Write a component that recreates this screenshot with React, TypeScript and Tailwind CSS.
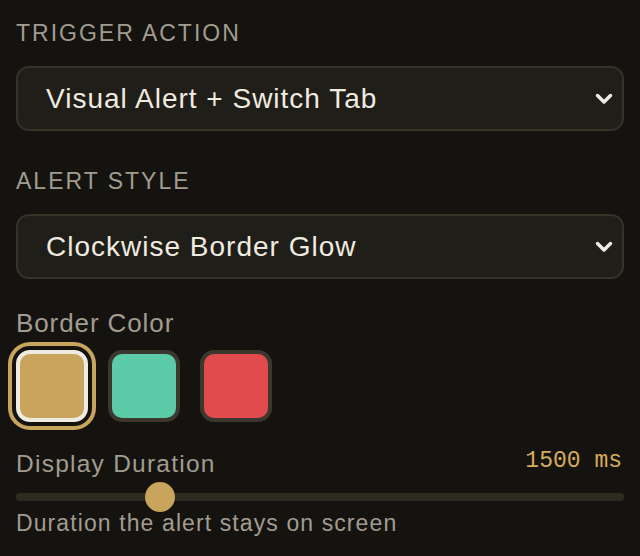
import { useState } from "react";

const colors = [
  { id: "gold", cls: "bg-[#c9a45c]" },
  { id: "teal", cls: "bg-[#5ccba8]" },
  { id: "red", cls: "bg-[#e24b4d]" },
];

function Chevron() {
  return (
    <svg width="20" height="14" viewBox="0 0 20 14" className="absolute right-[8px] top-1/2 -translate-y-1/2">
      <polyline points="3.5,3.5 10,10 16.5,3.5" fill="none" stroke="#f0ebe0" strokeWidth="3.5" strokeLinecap="round" strokeLinejoin="round" />
    </svg>
  );
}

function SelectBox({ label, value }: { label: string; value: string }) {
  return (
    <div className="flex flex-col">
      <div className="text-[23px] leading-none tracking-[2px] uppercase text-[#a29c90] pt-[22px] pb-[21px]">{label}</div>
      <div className="relative h-[65px] rounded-[13px] border-2 border-[#36322a] bg-[#201e18] flex items-center pl-[28px]">
        <span className="text-[28px] leading-none tracking-[1px] text-[#f0ebe0]">{value}</span>
        <Chevron />
      </div>
    </div>
  );
}

export default function App() {
  const [picked, setPicked] = useState("gold");
  const ms = 1500;

  return (
    <div className="w-[640px] h-[556px] bg-[#15130f] px-[16px] overflow-hidden" style={{ fontFamily: "'Liberation Sans', Arial, sans-serif" }}>
      <SelectBox label="Trigger Action" value="Visual Alert + Switch Tab" />
      <div className="h-[17px]" />
      <SelectBox label="Alert Style" value="Clockwise Border Glow" />

      <div className="text-[26px] leading-none tracking-[0.9px] text-[#a29c90] mt-[31px]">Border Color</div>
      <div className="flex gap-[20px] mt-[14px]">
        {colors.map((c) => (
          <button
            key={c.id}
            onClick={() => setPicked(c.id)}
            className={`w-[72px] h-[72px] rounded-[14px] border-[4px] ${c.cls} ${
              picked === c.id
                ? "border-[#f0ebe0] shadow-[0_0_0_4px_#15130f,0_0_0_8px_#c9a45c]"
                : "border-[#3b372e]"
            }`}
          />
        ))}
      </div>

      <div className="flex items-start justify-between mt-[30px]">
        <span className="text-[24.5px] leading-none tracking-[1.25px] text-[#a29c90]">Display Duration</span>
        <span className="text-[23px] leading-none text-[#d4ac5c] -mt-[2px] pr-[2px]" style={{ fontFamily: "'Liberation Mono', monospace" }}>
          {ms} ms
        </span>
      </div>
      <div className="relative h-[32px] mt-[4px] flex items-center">
        <div className="w-full h-[8px] rounded-full bg-[#2e2a22]" />
        <div className="absolute left-[129px] top-px w-[30px] h-[30px] rounded-full bg-[#c9a45c]" />
      </div>
      <div className="text-[23px] leading-none tracking-[1.1px] text-[#a29c90] -mt-[1px]">Duration the alert stays on screen</div>
    </div>
  );
}
